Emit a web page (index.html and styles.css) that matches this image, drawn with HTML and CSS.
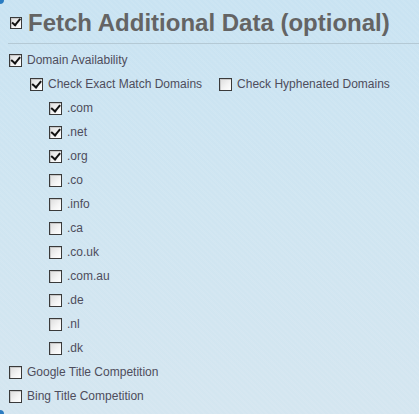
FILE: index.html
```html
<!DOCTYPE html>
<html>
<head>
<meta charset="utf-8">
<link rel="stylesheet" href="styles.css">
</head>
<body>
<div class="panel">
  <span class="corner corner-top"></span>
  <span class="corner corner-bottom"></span>
  <div class="title">
    <span class="cb cb-title checked"></span>
    <h1>Fetch Additional Data (optional)</h1>
  </div>
  <div class="list">
    <div class="row l1"><span class="cb checked"></span><span class="lbl">Domain Availability</span></div>
    <div class="row l2">
      <span class="cb checked"></span><span class="lbl">Check Exact Match Domains</span>
      <span class="cb hy"></span><span class="lbl">Check Hyphenated Domains</span>
    </div>
    <div class="row l3"><span class="cb checked"></span><span class="lbl">.com</span></div>
    <div class="row l3"><span class="cb checked"></span><span class="lbl">.net</span></div>
    <div class="row l3"><span class="cb checked"></span><span class="lbl">.org</span></div>
    <div class="row l3"><span class="cb"></span><span class="lbl">.co</span></div>
    <div class="row l3"><span class="cb"></span><span class="lbl">.info</span></div>
    <div class="row l3"><span class="cb"></span><span class="lbl">.ca</span></div>
    <div class="row l3"><span class="cb"></span><span class="lbl">.co.uk</span></div>
    <div class="row l3"><span class="cb"></span><span class="lbl">.com.au</span></div>
    <div class="row l3"><span class="cb"></span><span class="lbl">.de</span></div>
    <div class="row l3"><span class="cb"></span><span class="lbl">.nl</span></div>
    <div class="row l3"><span class="cb"></span><span class="lbl">.dk</span></div>
    <div class="row l1"><span class="cb"></span><span class="lbl">Google Title Competition</span></div>
    <div class="row l1"><span class="cb"></span><span class="lbl">Bing Title Competition</span></div>
  </div>
</div>
</body>
</html>
```
FILE: styles.css
```css
html, body {
  margin: 0;
  padding: 0;
}
body {
  width: 419px;
  height: 414px;
  overflow: hidden;
  font-family: "Liberation Sans", Arial, sans-serif;
  background:
    repeating-linear-gradient(45deg, rgba(255,255,255,0.06) 0 2px, rgba(255,255,255,0) 2px 4px),
    linear-gradient(180deg, #c9e3f2 0%, #cfe5f1 50%, #d4e6f0 100%);
}
.panel {
  position: relative;
  height: 414px;
}
.corner {
  position: absolute;
  left: 0;
  width: 4px;
  height: 4px;
  background: #2b7cc1;
}
.corner-top {
  top: 0;
  border-bottom-right-radius: 4px;
}
.corner-bottom {
  bottom: 0;
  border-top-right-radius: 4px;
}
.title {
  display: flex;
  align-items: flex-start;
  margin-left: 8px;
  height: 43px;
  border-bottom: 1px solid #b4c9d5;
  box-sizing: content-box;
}
.title h1 {
  margin: 9px 0 0 6px;
  font-size: 24px;
  line-height: 28px;
  font-weight: bold;
  color: #646464;
  white-space: nowrap;
}
.cb {
  position: relative;
  flex: none;
  width: 11px;
  height: 11px;
  border: 1px solid #3a3a3a;
  background: linear-gradient(135deg, #dcdcdc 0%, #f4f4f4 60%, #ffffff 100%);
  box-shadow: inset 1px 1px 0 #c8c8c8;
}
.cb.checked::after {
  content: "";
  position: absolute;
  left: 2px;
  top: 0px;
  width: 4px;
  height: 7px;
  border-right: 2px solid #111;
  border-bottom: 2px solid #111;
  transform: rotate(40deg);
  transform-origin: 60% 60%;
}
.cb-title {
  width: 10px;
  height: 10px;
  margin: 17px 0 0 2px;
}
.cb-title.checked::after {
  left: 2px;
  top: -1px;
  width: 3px;
  height: 7px;
}
.list {
  padding-top: 4px;
}
.row {
  display: flex;
  align-items: center;
  height: 24px;
}
.l1 { padding-left: 9px; }
.l2 { padding-left: 30px; }
.l3 { padding-left: 49px; }
.lbl {
  margin-left: 5px;
  font-size: 12px;
  color: #4e4d5c;
  white-space: nowrap;
}
.cb.hy {
  margin-left: 17px;
}
```
